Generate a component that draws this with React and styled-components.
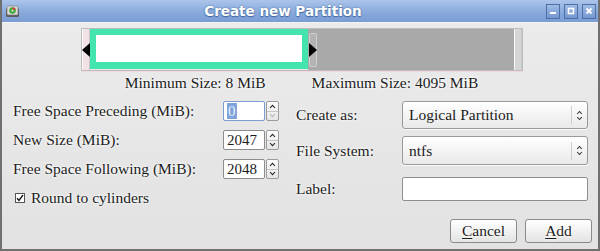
import React from "react";
import styled, { createGlobalStyle } from "styled-components";

const Global = createGlobalStyle`
  html, body {
    margin: 0;
    padding: 0;
    background: #e4e4e4;
  }
  * {
    box-sizing: border-box;
  }
`;

const Window = styled.div`
  width: 600px;
  height: 251px;
  display: flex;
  flex-direction: column;
  border: 2px solid #707070;
  border-top: none;
  background: linear-gradient(#ececec, #e2e2e2);
  font-family: "Liberation Serif", "DejaVu Serif", serif;
  font-size: 15.5px;
  color: #1c1c1c;
  overflow: hidden;
`;

const TitleBar = styled.div`
  height: 23px;
  margin: 0 -2px;
  display: flex;
  align-items: center;
  padding: 0 4px 0 5px;
  background: linear-gradient(#abc4ea, #86a8db 60%, #7b9dd4);
  border-bottom: 1px solid #f4f4f4;
`;

const Title = styled.div`
  flex: 1;
  text-align: center;
  color: #fff;
  font-family: "DejaVu Sans", sans-serif;
  font-weight: bold;
  font-size: 13.5px;
  text-shadow: 0 0 2px #45689e, 0 1px 1px #45689e;
`;

const WinButtons = styled.div`
  display: flex;
  gap: 4px;
`;

const WinButton = styled.div`
  width: 14px;
  height: 15px;
  border: 1px solid #4d6fa6;
  background: linear-gradient(#9fbbe6, #7597cf);
  display: flex;
  align-items: center;
  justify-content: center;
`;

const Body = styled.div`
  flex: 1;
  display: flex;
  flex-direction: column;
  padding: 0 6px 0 9px;
`;

const BarFrame = styled.div`
  position: relative;
  align-self: center;
  margin-top: 5px;
  margin-left: 1px;
  width: 442px;
  height: 43px;
  display: flex;
  border: 1px solid #bdbdbd;
  box-shadow: 0 1px 0 #f2d9dc;
`;

const EdgeStrip = styled.div`
  width: 8px;
  background: ${(p) => p.$bg};
  border-left: 1px solid #fafafa;
  border-right: 1px solid #c6c6c6;
`;

const UsedBlock = styled.div`
  width: 218px;
  border: 6px solid #43e4ad;
  border-bottom-width: 7px;
  margin-bottom: 1px;
  background: #fff;
`;

const FreeArea = styled.div`
  flex: 1;
  background: #a9a9a9;
  padding: 4px 0 3px 1px;
  display: flex;
`;

const Handle = styled.div`
  width: 8px;
  border: 1px solid #cfcfcf;
  border-radius: 2px;
  background: #b3b3b3;
`;

const Arrow = styled.div`
  position: absolute;
  top: 14px;
  left: ${(p) => p.$left}px;
  width: 0;
  height: 0;
  border-top: 7px solid transparent;
  border-bottom: 7px solid transparent;
  ${(p) =>
    p.$dir === "left"
      ? "border-right: 8px solid #000;"
      : "border-left: 8px solid #000;"}
`;

const SizeRow = styled.div`
  display: flex;
  justify-content: center;
  gap: 46px;
  height: 20px;
  align-items: center;
  margin-top: 2px;
  padding-left: 0;
`;

const Glow = styled.span`
  text-shadow: 0 0 3px #fff, 0 0 3px #fff;
  white-space: nowrap;
`;

const Form = styled.div`
  display: flex;
  align-items: flex-start;
  margin-top: 8px;
`;

const LeftCol = styled.div`
  width: 268px;
  display: grid;
  grid-template-columns: 1fr 56px;
  grid-auto-rows: 20px;
  row-gap: 9px;
  padding-left: 2px;
`;

const RightCol = styled.div`
  margin-left: 17px;
  display: grid;
  grid-template-columns: 106px 186px;
  grid-template-rows: 28px 29px 29px;
  row-gap: 7px;
  align-items: center;
`;

const FieldLabel = styled(Glow)`
  display: flex;
  align-items: center;
  align-self: ${(p) => (p.$bottom ? "end" : "center")};
  height: ${(p) => (p.$bottom ? "24px" : "auto")};
`;

const Spin = styled.div`
  display: flex;
  height: 20px;
`;

const SpinEntry = styled.div`
  flex: 1;
  background: #fff;
  border: 1px solid ${(p) => (p.$focus ? "#7c9bcf" : "#8c8c8c")};
  border-radius: 2px;
  display: flex;
  align-items: center;
  padding-left: 3px;
  font-size: 15px;
`;

const Selected = styled.span`
  background: #7fa3d8;
  color: #e8f0ff;
  padding: 0 1px;
  line-height: 16px;
`;

const SpinButtons = styled.div`
  width: 13px;
  margin-left: 1px;
  display: flex;
  flex-direction: column;
  border: 1px solid #9a9a9a;
  border-radius: 2px;
  background: linear-gradient(#fdfdfd, #e6e6e6);
`;

const SpinHalf = styled.div`
  flex: 1;
  display: flex;
  align-items: center;
  justify-content: center;
  & + & {
    border-top: 1px solid #c4c4c4;
  }
`;

const CheckRow = styled.div`
  grid-column: 1 / span 2;
  display: flex;
  align-items: center;
  gap: 6px;
  padding-left: 2px;
`;

const CheckBox = styled.div`
  width: 10px;
  height: 10px;
  border: 1px solid #555;
  background: #fff;
  display: flex;
  align-items: center;
  justify-content: center;
`;

const Combo = styled.div`
  height: ${(p) => p.$h}px;
  display: flex;
  align-items: center;
  border: 1px solid #999;
  border-radius: 3px;
  background: linear-gradient(#ffffff, #f3f3f3 55%, #e9e9e9);
  box-shadow: 0 1px 0 #fafafa;
`;

const ComboText = styled.div`
  flex: 1;
  padding-left: 6px;
  font-size: 15.5px;
`;

const ComboArrow = styled.div`
  width: 16px;
  height: 18px;
  border-left: 1px solid #cdcdcd;
  display: flex;
  align-items: center;
  justify-content: center;
`;

const Entry = styled.div`
  height: 24px;
  background: #fff;
  border: 1px solid #8f8f8f;
  border-radius: 2px;
  align-self: end;
`;

const Buttons = styled.div`
  display: flex;
  justify-content: flex-end;
  gap: 8px;
  margin-top: 11px;
`;

const Button = styled.div`
  width: 67px;
  height: 24px;
  border: 1px solid #8a8a8a;
  border-radius: 3px;
  background: linear-gradient(#ffffff, #f1f1f1 50%, #e3e3e3);
  display: flex;
  align-items: center;
  justify-content: center;
  font-size: 15.5px;
  u {
    text-decoration-thickness: 1px;
    text-underline-offset: 2px;
  }
`;

const DiskIcon = () => (
  <svg width="15" height="13" viewBox="0 0 15 13">
    <rect x="1" y="3" width="13" height="9" rx="1.5" fill="#5d5d5d" />
    <rect x="2" y="1" width="11" height="9" rx="1.5" fill="#d9d9d9" stroke="#777" strokeWidth="0.6" />
    <circle cx="7.5" cy="5.5" r="3.3" fill="#3fae3a" />
    <path d="M7.5 5.5 L7.5 2.2 A3.3 3.3 0 0 1 10.6 4.6 Z" fill="#d33" />
    <circle cx="7.5" cy="5.5" r="1" fill="#eee" />
  </svg>
);

const Chevron = ({ up, color = "#222" }) => (
  <svg width="7" height="5" viewBox="0 0 7 5">
    <path
      d={up ? "M1 4 L3.5 1.3 L6 4" : "M1 1 L3.5 3.7 L6 1"}
      fill="none"
      stroke={color}
      strokeWidth="1.1"
    />
  </svg>
);

const UpDown = () => (
  <svg width="7" height="11" viewBox="0 0 7 11">
    <path d="M1.2 4 L3.5 1.5 L5.8 4 M1.2 7 L3.5 9.5 L5.8 7" fill="none" stroke="#333" strokeWidth="1.1" />
  </svg>
);

const SpinBox = ({ value, focus }) => (
  <Spin>
    <SpinEntry $focus={focus}>{focus ? <Selected>{value}</Selected> : value}</SpinEntry>
    <SpinButtons>
      <SpinHalf>
        <Chevron up />
      </SpinHalf>
      <SpinHalf>
        <Chevron color={focus ? "#b5b5b5" : "#222"} />
      </SpinHalf>
    </SpinButtons>
  </Spin>
);

const App = () => {
  return (
    <>
      <Global />
      <Window>
        <TitleBar>
          <DiskIcon />
          <Title>Create new Partition</Title>
          <WinButtons>
            <WinButton>
              <svg width="8" height="8" viewBox="0 0 8 8">
                <rect x="1" y="5" width="6" height="2" fill="#fff" />
              </svg>
            </WinButton>
            <WinButton>
              <svg width="8" height="8" viewBox="0 0 8 8">
                <rect x="1.5" y="1.5" width="5" height="5" fill="none" stroke="#fff" strokeWidth="1.6" />
              </svg>
            </WinButton>
            <WinButton>
              <svg width="8" height="8" viewBox="0 0 8 8">
                <path d="M1.5 1.5 L6.5 6.5 M6.5 1.5 L1.5 6.5" stroke="#fff" strokeWidth="1.8" />
              </svg>
            </WinButton>
          </WinButtons>
        </TitleBar>
        <Body>
          <BarFrame>
            <EdgeStrip $bg="#f1e3e5" />
            <UsedBlock />
            <FreeArea>
              <Handle />
            </FreeArea>
            <EdgeStrip $bg="#d6d6d6" />
            <Arrow $dir="left" $left={0} />
            <Arrow $dir="right" $left={227} />
          </BarFrame>
          <SizeRow>
            <Glow>Minimum Size: 8 MiB</Glow>
            <Glow>Maximum Size: 4095 MiB</Glow>
          </SizeRow>
          <Form>
            <LeftCol>
              <FieldLabel>Free Space Preceding (MiB):</FieldLabel>
              <SpinBox value="0" focus />
              <FieldLabel>New Size (MiB):</FieldLabel>
              <SpinBox value="2047" />
              <FieldLabel>Free Space Following (MiB):</FieldLabel>
              <SpinBox value="2048" />
              <CheckRow>
                <CheckBox>
                  <svg width="8" height="8" viewBox="0 0 8 8">
                    <path d="M1 4.2 L3 6.4 L7 1" fill="none" stroke="#111" strokeWidth="1.3" />
                  </svg>
                </CheckBox>
                <Glow>Round to cylinders</Glow>
              </CheckRow>
            </LeftCol>
            <RightCol>
              <FieldLabel>Create as:</FieldLabel>
              <Combo $h={28}>
                <ComboText>Logical Partition</ComboText>
                <ComboArrow>
                  <UpDown />
                </ComboArrow>
              </Combo>
              <FieldLabel>File System:</FieldLabel>
              <Combo $h={29}>
                <ComboText>ntfs</ComboText>
                <ComboArrow>
                  <UpDown />
                </ComboArrow>
              </Combo>
              <FieldLabel $bottom>Label:</FieldLabel>
              <Entry />
            </RightCol>
          </Form>
          <Buttons>
            <Button>
              <Glow>
                <u>C</u>ancel
              </Glow>
            </Button>
            <Button>
              <Glow>
                <u>A</u>dd
              </Glow>
            </Button>
          </Buttons>
        </Body>
      </Window>
    </>
  );
};

export default App;
